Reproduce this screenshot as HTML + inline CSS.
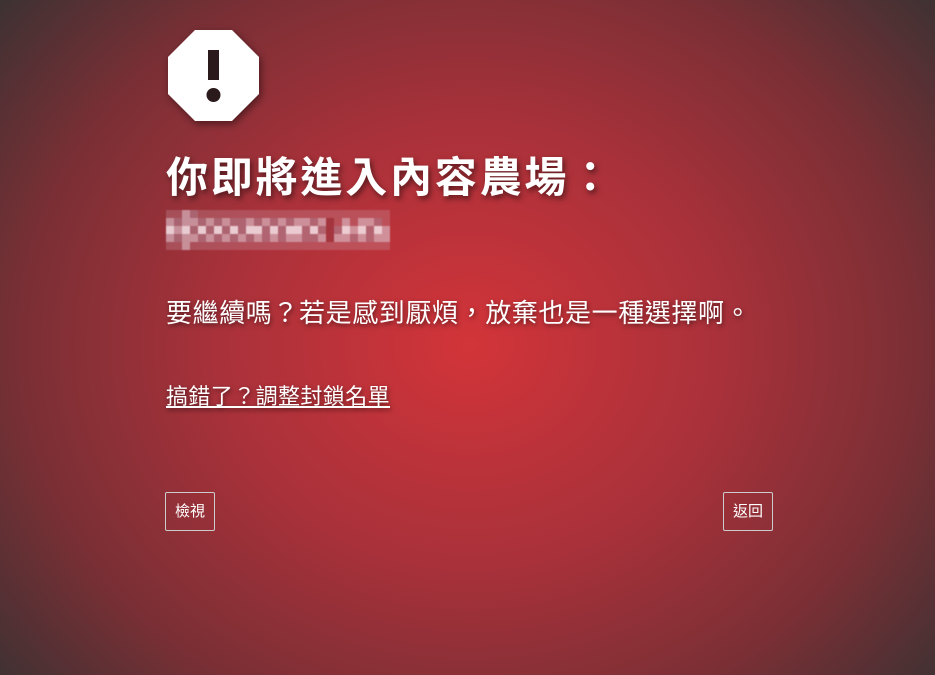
<!DOCTYPE html>
<html><head><meta charset="utf-8"><style>
html,body{margin:0;width:935px;height:675px;overflow:hidden}
body{background:radial-gradient(ellipse 640px 560px at 470px 345px,#d23439 0%,#a8313a 40%,#7a2f35 70%,#333232 100%);font-family:"Liberation Sans","Noto Sans CJK TC",sans-serif;color:#fff;position:relative}
.oct{position:absolute;left:168px;top:30px;width:91px;height:91px;filter:drop-shadow(2px 3px 4px rgba(0,0,0,.45))}
h1{position:absolute;left:166px;top:144px;margin:0;font-size:42px;font-weight:bold;letter-spacing:2.8px;text-shadow:2px 3px 6px rgba(0,0,0,.5);white-space:nowrap}
.dom{position:absolute;left:166px;top:210px;width:224px;height:38px;display:grid;grid-template-columns:repeat(28,8px);grid-auto-rows:8px;opacity:.9;filter:blur(.5px)}
.dom i{display:block}
p{position:absolute;left:166px;top:293px;margin:0;font-size:26px;letter-spacing:.6px;text-shadow:1px 2px 5px rgba(0,0,0,.5);white-space:nowrap}
a{position:absolute;left:166px;top:379px;font-size:22px;letter-spacing:.4px;color:#fff;text-decoration:underline;text-shadow:1px 2px 5px rgba(0,0,0,.5);white-space:nowrap}
.btn{position:absolute;top:492px;width:48px;height:37px;border:1px solid #ccc;border-radius:2px;font-size:15px;line-height:37px;text-align:center}
</style></head><body>
<svg class="oct" viewBox="0 0 91 91"><polygon points="27,0 64,0 91,27 91,64 64,91 27,91 0,64 0,27" fill="#fff"/><rect x="40" y="20" width="11" height="30" fill="#2a1a1c"/><circle cx="45.5" cy="65" r="7" fill="#2a1a1c"/></svg>
<h1>你即將進入內容農場：</h1>
<div class="dom" id="d"></div>
<p>要繼續嗎？若是感到厭煩，放棄也是一種選擇啊。</p>
<a>搞錯了？調整封鎖名單</a>
<div class="btn" style="left:165px">檢視</div>
<div class="btn" style="left:723px">返回</div>
<script>
var d=document.getElementById('d'),s='';
var rows=[
"aabcaaaaaaaaaaaaaaaaaaaaaaaa",
"bcbbcbcbccbcbcbcbbcb.ababbca",
"dbdcdcdcdcddcdcddcdc.cdbdcdb",
"bcbbcbcbcbcbcbcbbccb.bbcbcbb",
"aabaaaaaaaaaaaaaaaaaaaaaaaaa"];
var c={a:'rgba(200,150,160,.35)',b:'rgba(220,190,200,.75)',c:'rgba(180,130,145,.7)',d:'rgba(245,230,235,.95)','.':'rgba(140,60,70,.4)'};
rows.forEach(function(r){for(var i=0;i<28;i++)s+='<i style="background:'+c[r[i]]+'"></i>'});
d.innerHTML=s;
</script>
</body></html>
